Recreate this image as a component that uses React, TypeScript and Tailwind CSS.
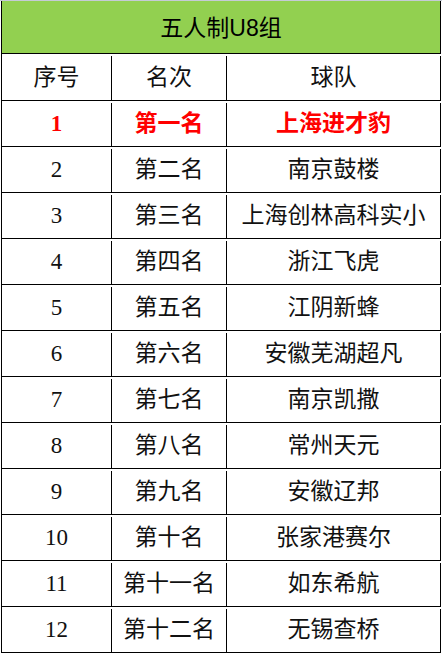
const rows: [string, string, string][] = [
  ['1', '第一名', '上海进才豹'],
  ['2', '第二名', '南京鼓楼'],
  ['3', '第三名', '上海创林高科实小'],
  ['4', '第四名', '浙江飞虎'],
  ['5', '第五名', '江阴新蜂'],
  ['6', '第六名', '安徽芜湖超凡'],
  ['7', '第七名', '南京凯撒'],
  ['8', '第八名', '常州天元'],
  ['9', '第九名', '安徽辽邦'],
  ['10', '第十名', '张家港赛尔'],
  ['11', '第十一名', '如东希航'],
  ['12', '第十二名', '无锡查桥'],
]

const cjk = "font-['Liberation_Serif','Noto_Sans_CJK_SC',serif]"

export default function App() {
  return (
    <div className="w-[442px] h-[654px] bg-white border-t border-[#c5cbd6]">
      <div className="ml-[1px] w-[440px] border-l border-black">
        <div className="h-[53px] bg-[#92d050] border-b border-r border-black flex items-center justify-center pt-[2px] text-[23px] text-black font-['Liberation_Sans','Noto_Sans_CJK_SC',sans-serif]">
          五人制U8组
        </div>
        <div className={`h-[47px] flex border-b border-black pt-[2px] text-[23px] text-[#111] ${cjk}`}>
          <div className="w-[110px] border-r border-black flex items-center justify-center">序号</div>
          <div className="w-[115px] border-r border-black flex items-center justify-center">名次</div>
          <div className="w-[214px] border-r border-black flex items-center justify-center">球队</div>
        </div>
        {rows.map(([n, place, team], i) => {
          const first = i === 0
          return (
            <div
              key={n}
              className={`h-[46px] flex border-b border-black pt-[2px] text-[23px] ${cjk} ${
                first ? 'text-[#ff0000] font-bold' : 'text-[#111]'
              }`}
            >
              <div className="w-[110px] border-r border-black flex items-center justify-center">{n}</div>
              <div className="w-[115px] border-r border-black flex items-center justify-center">{place}</div>
              <div className="w-[214px] border-r border-black flex items-center justify-center">{team}</div>
            </div>
          )
        })}
      </div>
    </div>
  )
}
